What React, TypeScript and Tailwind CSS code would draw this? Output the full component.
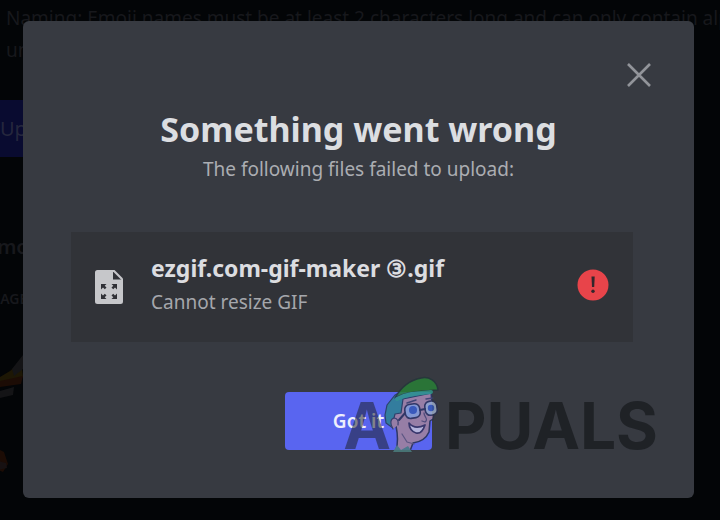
import React from 'react';

interface FailedFile {
  name: string;
  reason: string;
}

const failedFiles: FailedFile[] = [
  { name: 'ezgif.com-gif-maker ③.gif', reason: 'Cannot resize GIF' }
];

function CloseIcon() {
  return (
    <svg viewBox="0 0 24 24" className="h-6 w-6" fill="none" stroke="currentColor" strokeWidth="2.6" aria-hidden="true">
      <path d="M1 1 23 23M23 1 1 23" />
    </svg>
  );
}

function ResizeFileIcon() {
  return (
    <svg viewBox="0 0 28 34" className="h-[34px] w-7 shrink-0" aria-hidden="true">
      <path fill="#c6c7ca" d="M2.5 0H18v9.5h10V31.500a2.500 2.500 0 0 1-2.500 2.500H2.500A2.500 2.500 0 0 1 0 31.500v-29A2.500 2.500 0 0 1 2.500 0Z" />
      <path fill="#c6c7ca" d="M18 0h1.500L28 8.500V10h-1.500L18 1.500Z" />
      <g fill="#303136">
        <path d="M6 14h5.500L9.700 15.800l1.800 1.800-1.700 1.700L8 17.500l-2 2Z" />
        <path d="M22 14v5.500l-2-2-1.800 1.800-1.700-1.700 1.800-1.800-1.800-1.800Z" />
        <path d="M6 29v-5.500l2 2 1.800-1.800 1.700 1.700-1.800 1.800 1.800 1.800Z" />
        <path d="M22 29h-5.500l1.800-1.800-1.800-1.800 1.700-1.700 1.800 1.800 2-2Z" />
      </g>
    </svg>
  );
}

function ErrorIcon() {
  return (
    <svg viewBox="0 0 32 32" className="mb-1 h-8 w-8 shrink-0" role="img" aria-label="Error">
      <circle cx="16" cy="16" r="15.500" fill="#e8444a" />
      <path fill="#33262b" d="M14.500 7.500h3.200l-.5 10.500h-2.200Z" />
      <circle cx="16" cy="22.300" r="1.700" fill="#33262b" />
    </svg>
  );
}

function Mascot() {
  return (
    <svg viewBox="0 0 58 78" className="h-[78px] w-[58px]" strokeLinecap="round" strokeLinejoin="round" aria-hidden="true">
      <path
        d="M13 75c2-8 2-16 0-25l-5-3c-4-3-5-8-3-11l4-9 12-10 27-2 1 13 3 4-2 11-3 2-1 11c-3 7-9 10-16 11l-3 8Z"
        fill="#a2839a"
        stroke="#27304e"
        strokeWidth="1.500"
      />
      <path d="M10 52 3 47l-1-8 2-10 8-10 12-6 26-1-1 5-29 6-2 14-6 1-2 8Z" fill="#2d8290" stroke="#253b55" strokeWidth="1.200" />
      <path d="M12 22C18 11 28 4 38 2c8-2 16 3 17 12-11 1-20 1-29 3-6 1-10 3-14 5Z" fill="#287f36" stroke="#25373a" strokeWidth="1.500" />
      <path d="M14 23c11-6 23-6 34-7" fill="none" stroke="#2e9684" strokeWidth="4" />
      <path d="M10 53c-3-5-3-10 1-11 3 0 5 3 4 7" fill="#a2839a" stroke="#34395a" strokeWidth="1.200" />
      <path d="m16 44 7-8" fill="none" stroke="#2b3050" strokeWidth="2" />
      <rect x="22" y="28" width="15" height="14" rx="5" fill="#8aa0cf" stroke="#2b3050" strokeWidth="1.600" transform="rotate(-9 30 35)" />
      <rect x="42" y="25" width="12" height="14" rx="5" fill="#9aabc6" stroke="#2b3050" strokeWidth="1.600" transform="rotate(-8 49 32)" />
      <path d="m37 34 5-1" stroke="#2b3050" strokeWidth="2" />
      <circle cx="30" cy="34" r="4" fill="#3457b4" />
      <circle cx="48" cy="32" r="3.200" fill="#3457b4" />
      <path d="m24 27 9-3M43 23l7-1" stroke="#3d4163" strokeWidth="1.500" />
      <path d="M41 37c0 4 5 6 1 9l-3-1" fill="none" stroke="#4d4768" strokeWidth="1.300" />
      <path d="M26 47c4 5 10 5 16 2-2 6-5 9-9 8-4-1-7-5-7-10Z" fill="#c5c1d8" stroke="#343057" strokeWidth="1.700" />
      <path d="m19 58 5 8 7 2" fill="none" stroke="#5c536f" strokeWidth="1.200" />
      <path d="m10 76 4-7 4 5 7-4 4 6Z" fill="#4b7d7d" />
    </svg>
  );
}

function Watermark() {
  return (
    <div className="pointer-events-none absolute right-9 bottom-8 flex items-end font-[Inter,sans-serif] text-[64px] leading-[80px] font-bold text-[#1b1e22] opacity-85">
      <span className="opacity-60">A</span>
      <span className="-ml-2 pr-1 pb-3">
        <Mascot />
      </span>
      <span>PUALS</span>
    </div>
  );
}

function EmojiSettings() {
  return (
    <main className="-ml-8 min-h-screen overflow-hidden pt-0.5 text-[#17181c]" aria-hidden="true">
      <p className="ml-[38px] w-[1000px] text-[19px] leading-8">
        Naming: Emoji names must be at least 2 characters long and can only contain alphanumeric characters and
        <br />
        underscores
      </p>
      <button type="button" tabIndex={-1} className="mt-[34px] h-[57px] w-48 bg-[#090b30] pl-8 text-left text-xl text-[#25273d]">
        Upload Emoji
      </button>
      <h2 className="mt-[74px] ml-[18px] text-xl leading-8 font-semibold">Emoji</h2>
      <h3 className="mt-6 ml-[14px] text-sm leading-6 font-semibold">IMAGE</h3>
      <svg viewBox="0 0 56 160" className="mt-8 h-40 w-14">
        <path fill="#1d1705" d="M32 34 42 28l11-10 2 16-14 6-9-2Z" />
        <path fill="#141416" d="m44 26 11-14v14L46 33Zm-12 22 14-4-1 8-13 3Z" />
        <path fill="#1c0c05" d="m32 38 23-5-2 8-21 3ZM30 106l6 3 4 12-5 8-5-2Z" />
        <path fill="#171112" d="m30 118 8 2 1 5-9 2Z" />
      </svg>
    </main>
  );
}

export default function App() {
  return (
    <div className="relative min-h-screen overflow-hidden bg-[#030507] font-['Noto_Sans',sans-serif]">
      <div className="h-screen overflow-hidden">
        <EmojiSettings />
      </div>

      {/* Modal layer */}
      <div className="absolute inset-0 pt-[21px] pr-[26px] pl-[23px]">
        <section
          role="dialog"
          aria-labelledby="upload-error-title"
          className="relative flex flex-col items-center rounded-md bg-[#373a41] px-12 pt-10 pb-12 text-center"
        >
          <button type="button" aria-label="Close" className="mr-[-5px] flex h-7 w-6 items-center self-end text-[#92949a]">
            <CloseIcon />
          </button>

          <h1 id="upload-error-title" className="mt-4 text-[34px] leading-[48px] font-bold text-[#dcdee1]">
            Something went wrong
          </h1>
          <p className="text-[19px] leading-8 text-[#abadb2]">The following files failed to upload:</p>

          <ul className="mt-[47px] w-full pr-[13px]">
            {failedFiles.map((file) => (
              <li key={file.name} className="flex h-[110px] items-center bg-[#313338] px-6 text-left">
                <ResizeFileIcon />
                <div className="ml-7 flex-1 pb-0.5">
                  <p className="text-[23px] leading-8 font-bold text-[#dcdde0]">{file.name}</p>
                  <p className="text-[19px] leading-9 text-[#a5a7ac]">{file.reason}</p>
                </div>
                <ErrorIcon />
              </li>
            ))}
          </ul>

          <button type="button" className="mt-[50px] h-[58px] w-[147px] rounded bg-[#5965f0] text-[19px] font-semibold text-[#eeeffc]">
            Got it
          </button>

          <Watermark />
        </section>
      </div>
    </div>
  );
}
